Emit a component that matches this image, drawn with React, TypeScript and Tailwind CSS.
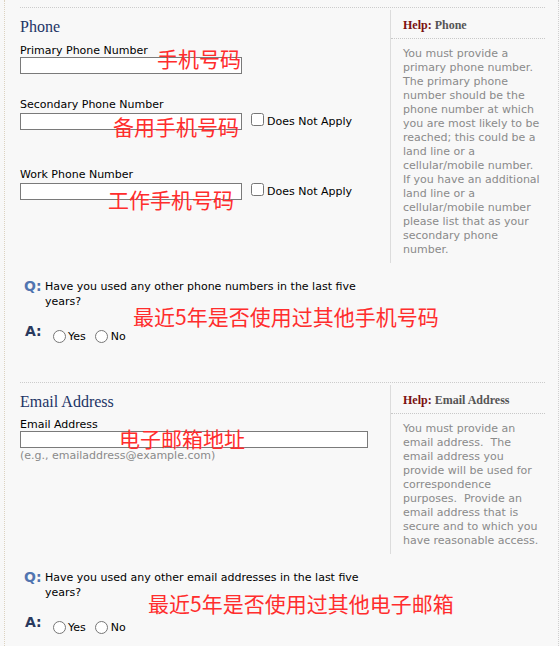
import React from "react";

const sans = { fontFamily: '"DejaVu Sans", Verdana, sans-serif' };
const serif = { fontFamily: '"Liberation Serif", "Times New Roman", serif' };
const cjk = { fontFamily: '"Noto Sans CJK SC", "Noto Sans", sans-serif' };

const phoneHelp = [
  "You must provide a",
  "primary phone number.",
  "The primary phone",
  "number should be the",
  "phone number at which",
  "you are most likely to be",
  "reached; this could be a",
  "land line or a",
  "cellular/mobile number.",
  "If you have an additional",
  "land line or a",
  "cellular/mobile number",
  "please list that as your",
  "secondary phone",
  "number.",
];

const emailHelp = [
  "You must provide an",
  "email address.\u00a0 The",
  "email address you",
  "provide will be used for",
  "correspondence",
  "purposes.\u00a0 Provide an",
  "email address that is",
  "secure and to which you",
  "have reasonable access.",
];

function HelpPanel({ title, lines }: { title: string; lines: string[] }) {
  return (
    <div className="mt-[2px] w-[155px] border-l border-[#dcdcdc]">
      <div className="border-b border-dotted border-[#c8c8c8] px-[12px] pt-[8px] pb-[6px]">
        <div className="text-[12px] leading-[14px] font-bold" style={serif}>
          <span className="text-[#7a1010]">Help:</span>{" "}
          <span className="text-[#555]">{title}</span>
        </div>
      </div>
      <div className="pl-[12px] pt-[8px] pb-[6px] text-[11px] leading-[14px] text-[#8a8a8a]">
        {lines.map((l, i) => (
          <div key={i} className="whitespace-nowrap">
            {l}
          </div>
        ))}
      </div>
    </div>
  );
}

function TextBox({ width }: { width: string }) {
  return (
    <input
      type="text"
      className={`block ${width} h-[17px] border border-[#7a7a7a] bg-white outline-none`}
    />
  );
}

function NotApply() {
  return (
    <label className="ml-[9px] flex items-start gap-[3px] text-[11px] leading-[13px] text-black">
      <input type="checkbox" className="w-[13px] h-[13px] m-0" />
      <span className="mt-[2px]">Does Not Apply</span>
    </label>
  );
}

function Question({ text, name }: { text: string; name: string }) {
  return (
    <div className="mt-[16px] pl-[19px] text-black">
      <div className="flex items-start">
        <span className="w-[21px] shrink-0 text-[14px] leading-[15px] font-bold text-[#5175b0]">
          Q:
        </span>
        <span className="w-[322px] text-[11px] leading-[15px]">{text}</span>
      </div>
      <div className="mt-[14px] flex items-start">
        <span className="w-[29px] shrink-0 pl-[1px] text-[14px] leading-[16px] font-bold text-[#2a3a5e]">
          A:
        </span>
        <div className="mt-[7px] flex items-center text-[11px] leading-[13px]">
          <label className="flex items-center gap-[2px]">
            <input type="radio" name={name} className="w-[13px] h-[13px] m-0" />
            <span>Yes</span>
          </label>
          <label className="ml-[9px] flex items-center gap-[3px]">
            <input type="radio" name={name} className="w-[13px] h-[13px] m-0" />
            <span>No</span>
          </label>
        </div>
      </div>
    </div>
  );
}

function Note({ text, className }: { text: string; className: string }) {
  return (
    <div
      className={`absolute whitespace-nowrap leading-none text-[#ff2d2d] ${className}`}
      style={cjk}
    >
      {text}
    </div>
  );
}

export default function App() {
  return (
    <div className="relative w-[560px] h-[646px] overflow-hidden bg-[#f8f8f8]" style={sans}>
      <div className="ml-[4px] w-[555px] h-full border-l border-r border-dotted border-l-[#dcd2c0] border-r-[#cfcfcf] pt-[7px]">
        {/* Phone */}
        <div className="ml-[15px] w-[525px] flex border-t border-dotted border-[#cccccc]">
          <div className="w-[370px] shrink-0 pt-[10px]">
            <h2 className="text-[16px] leading-[18px] text-[#1d3466]" style={serif}>
              Phone
            </h2>
            <div className="mt-[8px] text-[11px] leading-[13px] text-black">
              Primary Phone Number
            </div>
            <TextBox width="w-[222px]" />
            <div className="mt-[24px] text-[11px] leading-[13px] text-black">
              Secondary Phone Number
            </div>
            <div className="mt-[2px] flex items-start">
              <TextBox width="w-[222px]" />
              <NotApply />
            </div>
            <div className="mt-[38px] text-[11px] leading-[13px] text-black">
              Work Phone Number
            </div>
            <div className="mt-[2px] flex items-start">
              <TextBox width="w-[222px]" />
              <NotApply />
            </div>
          </div>
          <HelpPanel title="Phone" lines={phoneHelp} />
        </div>
        <Question
          name="otherPhone"
          text="Have you used any other phone numbers in the last five years?"
        />

        {/* Email */}
        <div className="mt-[39px] ml-[15px] w-[525px] flex border-t border-dotted border-[#cccccc]">
          <div className="w-[370px] shrink-0 pt-[10px]">
            <h2 className="text-[16px] leading-[18px] text-[#1d3466]" style={serif}>
              Email Address
            </h2>
            <div className="mt-[7px] text-[11px] leading-[13px] text-black">
              Email Address
            </div>
            <TextBox width="w-[348px]" />
            <div className="mt-[1px] text-[11px] leading-[13px] text-[#8a8a8a]">
              (e.g., emailaddress@example.com)
            </div>
          </div>
          <HelpPanel title="Email Address" lines={emailHelp} />
        </div>
        <Question
          name="otherEmail"
          text="Have you used any other email addresses in the last five years?"
        />
      </div>

      <Note text="手机号码" className="left-[157px] top-[48px] text-[21px]" />
      <Note text="备用手机号码" className="left-[113px] top-[116px] text-[21px]" />
      <Note text="工作手机号码" className="left-[108px] top-[189px] text-[21px]" />
      <Note text="最近5年是否使用过其他手机号码" className="left-[133px] top-[306px] text-[21px]" />
      <Note text="电子邮箱地址" className="left-[119px] top-[428px] text-[21px]" />
      <Note text="最近5年是否使用过其他电子邮箱" className="left-[148px] top-[593px] text-[21px]" />
    </div>
  );
}
